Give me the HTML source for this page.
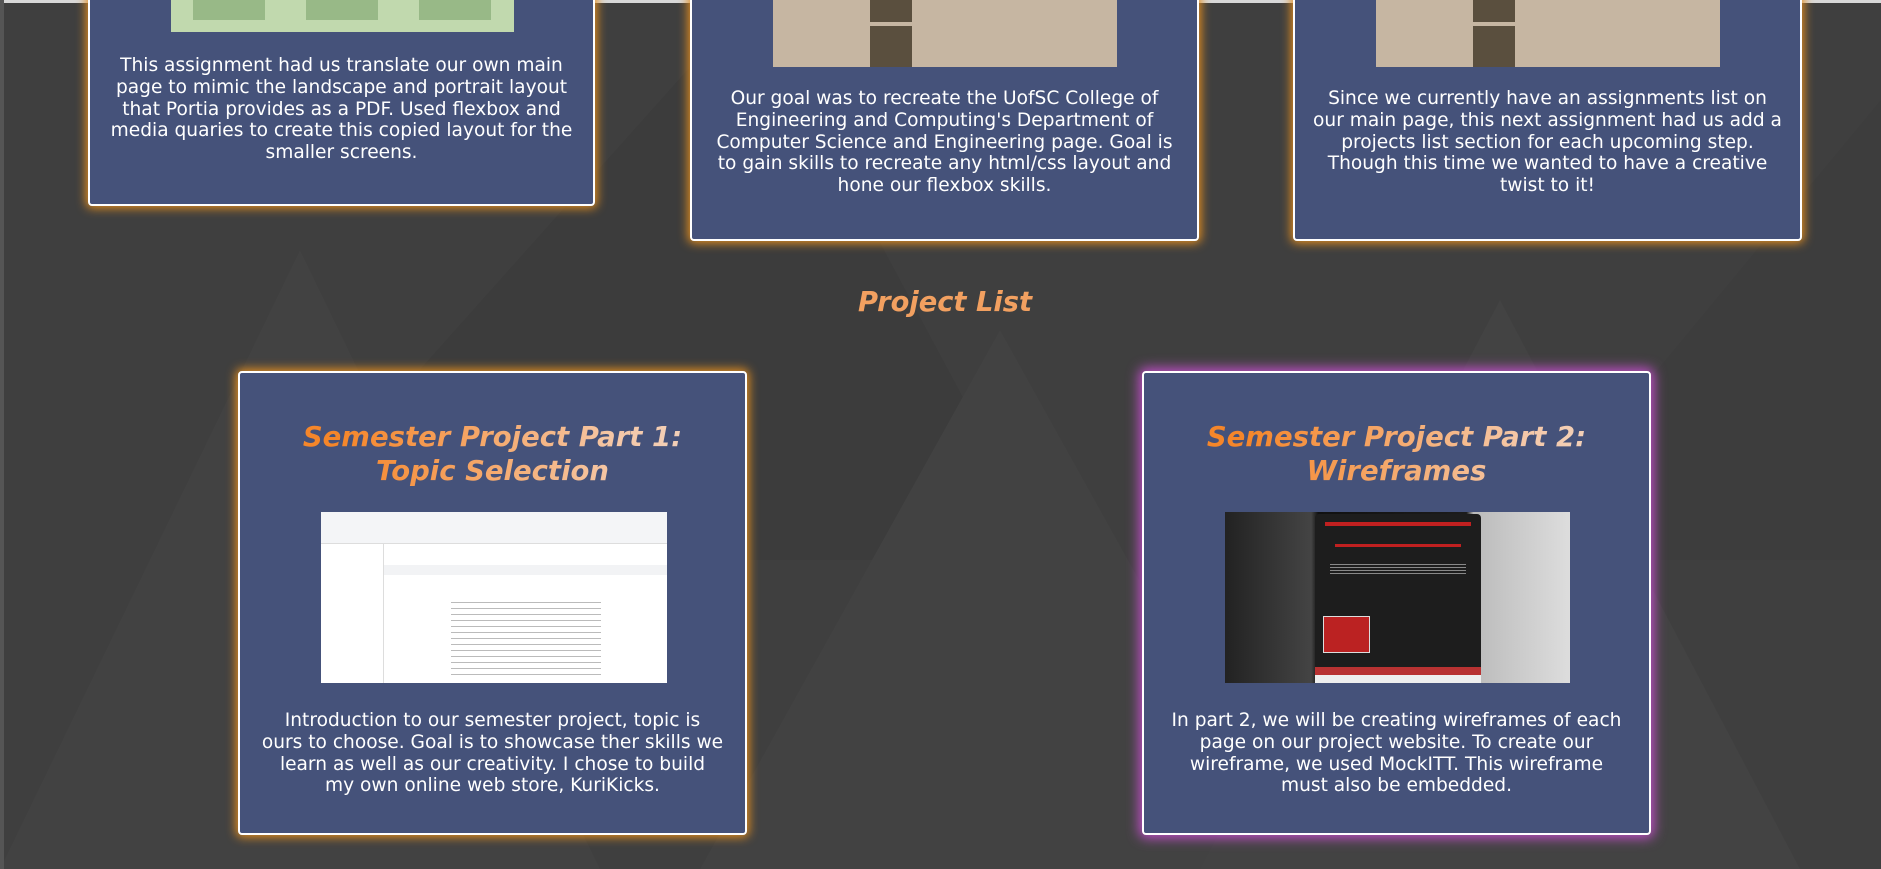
<!DOCTYPE html>
<html><head><meta charset="utf-8"><style>
*{margin:0;padding:0;box-sizing:border-box}
html,body{width:1881px;height:869px;overflow:hidden}
body{background:#404040;font-family:"DejaVu Sans","Liberation Sans",sans-serif;position:relative;color:#fff}
.bg{position:absolute;left:0;top:0}
.card{position:absolute;background:#45527a;border:2px solid #fff;border-radius:4px;box-shadow:0 0 10px 2px #e8901e;text-align:center;overflow:hidden}
.card.m{box-shadow:0 0 12px 3px #c04fc8}
.card p{position:absolute;left:0;right:0;font-size:18.6px;line-height:21.8px;padding:0 18px}
.card p.b{padding:0 8px;white-space:nowrap}
.card h2{position:absolute;left:0;right:0;font-size:27.5px;line-height:34px;font-style:italic;font-weight:bold;background:linear-gradient(90deg,#f5862a 20%,#f5c8a8 75%,#f0d8c8);-webkit-background-clip:text;background-clip:text;color:transparent}
.img{position:absolute}
h1{position:absolute;left:0;width:1890px;top:287px;text-align:center;font-size:27.3px;font-style:italic;font-weight:bold;color:#f2a060}
</style></head><body>
<svg class="bg" width="1881" height="869">
<rect width="1881" height="869" fill="#3f3f3f"/>
<polygon points="0,869 300,250 600,869" fill="#424242"/>
<polygon points="250,560 750,0 1050,560" fill="#3c3c3c"/>
<polygon points="700,869 1000,330 1300,869" fill="#424242"/>
<polygon points="1200,869 1500,300 1800,869" fill="#434343"/>
<polygon points="1500,560 1881,100 1881,560" fill="#3d3d3d"/>
<rect x="0" y="0" width="1881" height="3" fill="#d8d8d8"/>
<rect x="0" y="0" width="4" height="869" fill="#555"/>
</svg>

<div class="card" style="left:88px;top:-10px;width:507px;height:216px">
 <div class="img" style="left:81px;top:0;width:343px;height:40px;background:#c1d9ae">
  <div style="position:absolute;left:22px;top:0;width:72px;height:28px;background:#98b987"></div>
  <div style="position:absolute;left:135px;top:0;width:72px;height:28px;background:#98b987"></div>
  <div style="position:absolute;left:248px;top:0;width:72px;height:28px;background:#98b987"></div>
 </div>
 <p style="top:63px">This assignment had us translate our own main page to mimic the landscape and portrait layout that Portia provides as a PDF. Used flexbox and media quaries to create this copied layout for the smaller screens.</p>
</div>

<div class="card" style="left:690px;top:-10px;width:509px;height:251px">
 <div class="img" style="left:81px;top:0;width:344px;height:75px;background:#c6b6a2">
  <div style="position:absolute;left:97px;top:0;width:42px;height:30px;background:#5a4f3e"></div>
  <div style="position:absolute;left:97px;top:34px;width:42px;height:41px;background:#5a4f3e"></div>
 </div>
 <p style="top:96px">Our goal was to recreate the UofSC College of Engineering and Computing's Department of Computer Science and Engineering page. Goal is to gain skills to recreate any html/css layout and hone our flexbox skills.</p>
</div>

<div class="card" style="left:1293px;top:-10px;width:509px;height:251px">
 <div class="img" style="left:81px;top:0;width:344px;height:75px;background:#c6b6a2">
  <div style="position:absolute;left:97px;top:0;width:42px;height:30px;background:#5a4f3e"></div>
  <div style="position:absolute;left:97px;top:34px;width:42px;height:41px;background:#5a4f3e"></div>
 </div>
 <p style="top:96px">Since we currently have an assignments list on our main page, this next assignment had us add a projects list section for each upcoming step. Though this time we wanted to have a creative twist to it!</p>
</div>

<h1>Project List</h1>

<div class="card" style="left:238px;top:371px;width:509px;height:464px">
 <h2 style="top:47px">Semester Project Part 1:<br>Topic Selection</h2>
 <div class="img" style="left:81px;top:139px;width:346px;height:171px;background:#fff">
  <div style="position:absolute;left:0;top:0;width:346px;height:32px;background:#f4f5f7;border-bottom:1px solid #ddd"></div>
  <div style="position:absolute;left:62px;top:53px;width:284px;height:10px;background:#f2f3f5"></div>
  <div style="position:absolute;left:62px;top:32px;width:1px;height:139px;background:#ddd"></div>
  <div style="position:absolute;left:130px;top:85px;width:150px;height:80px;background:repeating-linear-gradient(#fff 0 5px,#bbb 5px 6px)"></div>
 </div>
 <p class="b" style="top:337px">Introduction to our semester project, topic is<br>ours to choose. Goal is to showcase ther skills we<br>learn as well as our creativity. I chose to build<br>my own online web store, KuriKicks.</p>
</div>

<div class="card m" style="left:1142px;top:371px;width:509px;height:464px">
 <h2 style="top:47px">Semester Project Part 2:<br>Wireframes</h2>
 <div class="img" style="left:81px;top:139px;width:345px;height:171px;background:linear-gradient(90deg,#222 0,#444 25%,#111 27%,#1c1c1c 70%,#bbb 72%,#ddd)">
  <div style="position:absolute;left:90px;top:2px;width:166px;height:169px;background:#1d1d1d;border-radius:4px"></div>
  <div style="position:absolute;left:100px;top:10px;width:146px;height:4px;background:#c02020"></div>
  <div style="position:absolute;left:110px;top:32px;width:126px;height:3px;background:#c02020"></div>
  <div style="position:absolute;left:105px;top:50px;width:136px;height:12px;background:repeating-linear-gradient(#1d1d1d 0 2px,#888 2px 3px)"></div>
  <div style="position:absolute;left:98px;top:104px;width:47px;height:37px;border:1px solid #ddd;background:#b22"></div>
  <div style="position:absolute;left:90px;top:155px;width:166px;height:8px;background:#b83232"></div>
  <div style="position:absolute;left:90px;top:163px;width:166px;height:8px;background:#eee"></div>
 </div>
 <p class="b" style="top:337px">In part 2, we will be creating wireframes of each<br>page on our project website. To create our<br>wireframe, we used MockITT. This wireframe<br>must also be embedded.</p>
</div>
</body></html>
